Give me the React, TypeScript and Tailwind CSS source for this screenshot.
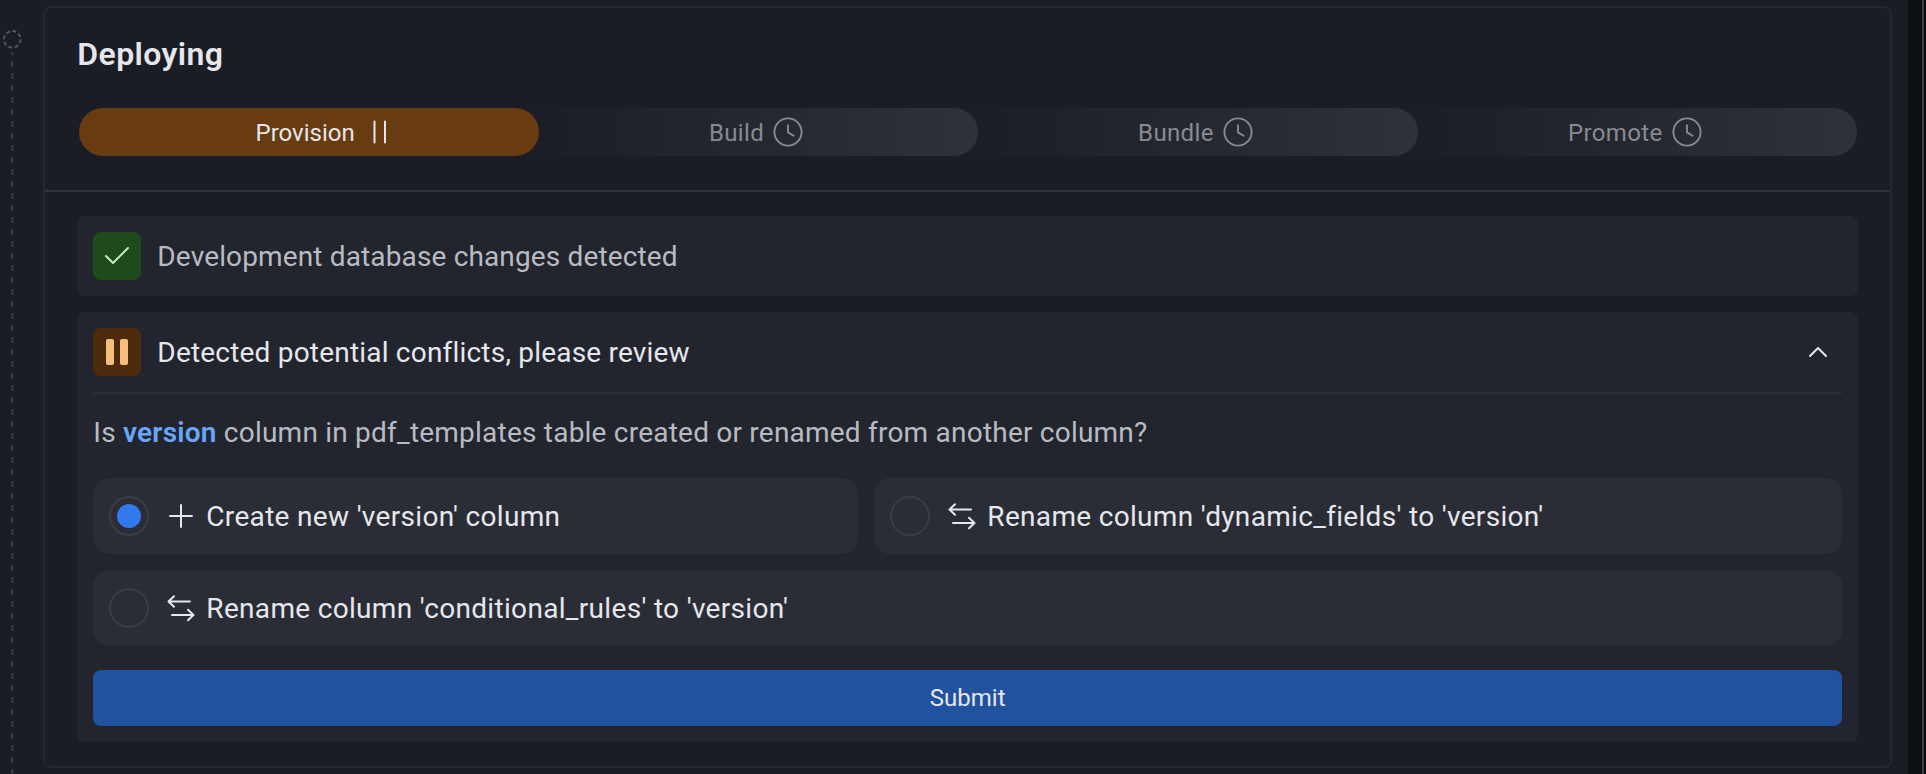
import React from "react";

function Clock() {
  return (
    <svg width="32" height="32" viewBox="0 0 32 32" fill="none" stroke="currentColor" strokeWidth="1.9" strokeLinecap="round" strokeLinejoin="round">
      <circle cx="16" cy="16" r="13.6" />
      <path d="M16 9.2V16.4L21.6 19.8" />
    </svg>
  );
}

function PauseThin() {
  return (
    <svg width="32" height="32" viewBox="0 0 32 32" fill="none" stroke="currentColor" strokeWidth="2" strokeLinecap="round">
      <path d="M11.5 5.5V26.5M22 5.5V26.5" />
    </svg>
  );
}

function Swap() {
  return (
    <svg width="28" height="28" viewBox="0 0 28 28" fill="none" stroke="currentColor" strokeWidth="2" strokeLinecap="round" strokeLinejoin="round">
      <path d="M23 7.5H1.8M7 2.2L1.5 7.5L7 12.7M5 21H26M21 15.8L26.5 21L21 26.2" />
    </svg>
  );
}

function Plus() {
  return (
    <svg width="28" height="28" viewBox="0 0 28 28" fill="none" stroke="currentColor" strokeWidth="2" strokeLinecap="round">
      <path d="M14 3V25M3 14H25" />
    </svg>
  );
}

function Step({ label, z }: { label: string; z: string }) {
  return (
    <div className={`relative ${z} -ml-5 flex h-12 flex-1 items-center justify-center gap-2 rounded-r-full bg-linear-to-r from-[#1a1d25] to-[#30323a] pl-4 text-2xl tracking-[0.35px] text-[#888a92]`}>
      <span className="pt-px">{label}</span>
      <Clock />
    </div>
  );
}

function Option({ label, icon, selected, className }: { label: string; icon: React.ReactNode; selected?: boolean; className: string }) {
  return (
    <div className={`flex h-19 items-center rounded-2xl bg-[#2b2d36] pl-4 text-[#e6e7ec] ${className}`}>
      <span className="flex size-10 items-center justify-center rounded-full border-2 border-[#3a3c46]">
        {selected && <span className="size-6 rounded-full bg-[#3478ee]" />}
      </span>
      <span className="ml-[18px]">{icon}</span>
      <span className="ml-[11px] pt-px text-[28px] tracking-[0.32px]">{label}</span>
    </div>
  );
}

export default function App() {
  return (
    <div className="flex h-[774px] w-[1926px] overflow-hidden bg-[#1a1d25] font-['Roboto','Noto_Sans',sans-serif]">
      <div className="flex w-[43.33px] shrink-0 flex-col pl-[3px] pt-[30px]">
        <svg width="20" height="744" viewBox="0 0 20 744" fill="none">
          <circle cx="9.3" cy="9.3" r="8.3" stroke="#5a5c64" strokeWidth="1.8" strokeDasharray="4 2.5" />
          <path d="M9.3 22V744" stroke="#3c3f47" strokeWidth="2" strokeDasharray="6 6" strokeDashoffset="3" />
        </svg>
      </div>
      <main className="mt-1.5 h-[762px] w-[1848.67px] shrink-0 rounded-lg border-2 border-[#24272f]">
        <header className="h-[184px] border-b-2 border-[#30333b] pl-[34px] pr-[33px] pt-6">
          <h1 className="-ml-[2px] text-[32px] leading-[44px] font-semibold tracking-[0.4px] text-[#e6e7ec]">Deploying</h1>
          <div className="mt-8 flex">
            <div className="relative z-40 flex h-12 w-[459.5px] items-center justify-center gap-2 rounded-full bg-[#683b11] pl-8 text-2xl text-[#e6e7ec]">
              <span className="pt-px">Provision</span>
              <PauseThin />
            </div>
            <Step label="Build" z="z-30" />
            <Step label="Bundle" z="z-20" />
            <Step label="Promote" z="z-10" />
          </div>
        </header>
        <div className="flex flex-col gap-4 px-8 pt-6">
          <section className="flex h-20 items-center gap-4 rounded-lg bg-[#23252e] px-4 text-[28px] tracking-[0.14px] text-[#b9bbc2]">
            <span className="flex size-12 items-center justify-center rounded-lg bg-[#1f4a1b]">
              <svg width="28" height="28" viewBox="0 0 28 28" fill="none" stroke="#bdf2b8" strokeWidth="2" strokeLinecap="round" strokeLinejoin="round">
                <path d="M3 14L10 21L25 6" />
              </svg>
            </span>
            <span className="pt-px">Development database changes detected</span>
          </section>
          <section className="h-[430px] rounded-lg bg-[#23252e] px-4 text-[28px]">
            <div className="flex h-[82px] items-center gap-4 border-b-2 border-[#2b2d36] text-[#e6e7ec]">
              <span className="flex size-12 items-center justify-center gap-1.5 rounded-lg bg-[#4d2b0c]">
                <span className="h-[26px] w-2 rounded-xs bg-[#f6bf80]" />
                <span className="h-[26px] w-2 rounded-xs bg-[#f6bf80]" />
              </span>
              <span className="grow pt-px tracking-[0.2px]">Detected potential conflicts, please review</span>
              <svg className="mr-[10px]" width="28" height="28" viewBox="0 0 28 28" fill="none" stroke="currentColor" strokeWidth="2" strokeLinecap="round" strokeLinejoin="round">
                <path d="M6 18L14 10L22 18" />
              </svg>
            </div>
            <p className="pt-[15px] leading-12 tracking-[0.22px] text-[#b9bbc2]">
              Is <b className="font-semibold text-[#69a6fa]">version</b> column in pdf_templates table created or renamed from another column?
            </p>
            <div className="mt-[21px] flex flex-wrap gap-4">
              <Option label="Create new 'version' column" icon={<Plus />} selected className="w-[765px]" />
              <Option label="Rename column 'dynamic_fields' to 'version'" icon={<Swap />} className="grow" />
              <Option label="Rename column 'conditional_rules' to 'version'" icon={<Swap />} className="w-full" />
            </div>
            <button className="mt-6 block h-14 w-full rounded-lg bg-[#21529f] text-2xl text-[#e6e7ec]">Submit</button>
          </section>
        </div>
      </main>
      <div className="ml-4 w-3.5 shrink-0 bg-[#0e0f13]" />
      <div className="w-0.5 shrink-0 bg-[#3e3f41]" />
      <div className="w-0.5 shrink-0 bg-[#08090b]" />
    </div>
  );
}
